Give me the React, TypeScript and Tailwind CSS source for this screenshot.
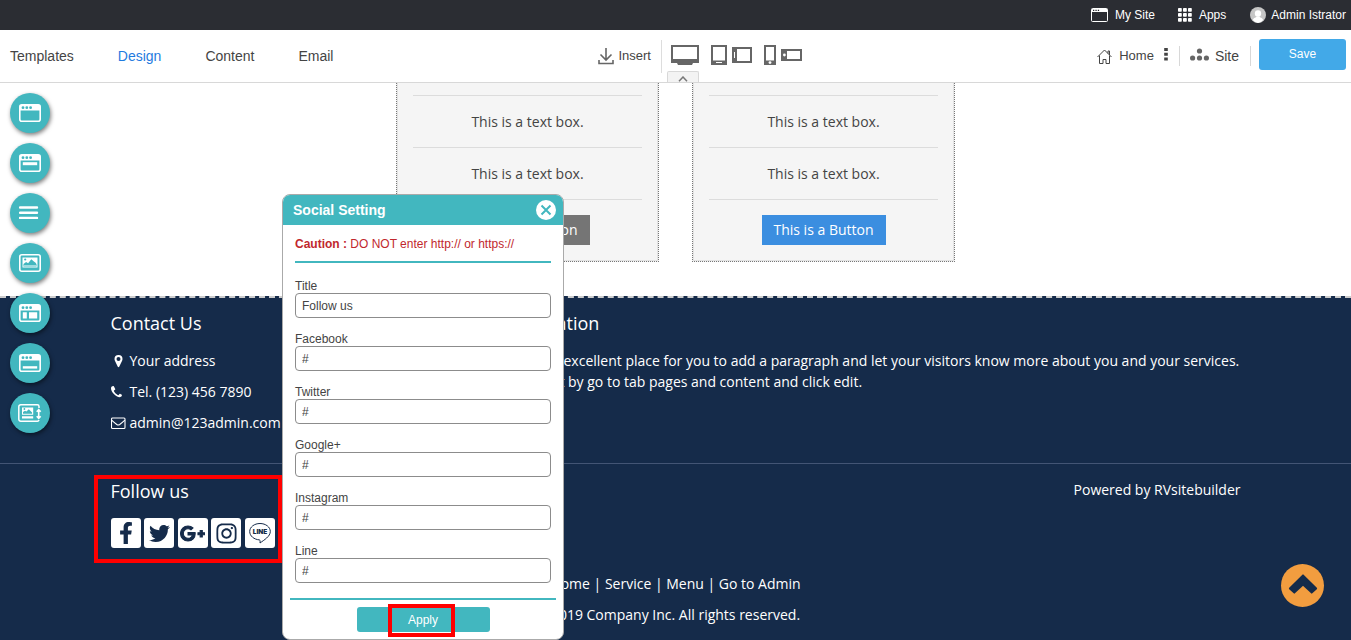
import type { ReactNode } from "react";
import { FaFacebookF, FaGooglePlusG, FaInstagram, FaTwitter } from "react-icons/fa";

function WindowIcon({ children }: { children?: ReactNode }) {
  return (
    <svg width="22" height="18" viewBox="0 0 22 18" fill="none" aria-hidden="true">
      <rect x="0.8" y="0.8" width="20.4" height="16.4" rx="2" stroke="white" strokeWidth="1.6" />
      <path d="M1 1h20v5.5H1z" fill="white" />
      <circle cx="4" cy="3.7" r="1.4" fill="#42b7bf" />
      <circle cx="7.8" cy="3.7" r="1.4" fill="#42b7bf" />
      <circle cx="11.6" cy="3.7" r="1.4" fill="#42b7bf" />
      {children}
    </svg>
  );
}

const tools: { label: string; icon: ReactNode }[] = [
  { label: "Header", icon: <WindowIcon /> },
  { label: "Title bar", icon: <WindowIcon><path d="M3.8 8.2h14.4v3H3.8z" fill="white" /></WindowIcon> },
  {
    label: "Navigation",
    icon: (
      <svg width="22" height="18" viewBox="0 0 22 18" aria-hidden="true">
        <path d="M1 3.500h17M1 8.700h17M1 13.900h17" stroke="white" strokeWidth="2.4" strokeLinecap="round" />
      </svg>
    ),
  },
  {
    label: "Banner",
    icon: (
      <svg width="22" height="18" viewBox="0 0 22 18" fill="none" aria-hidden="true">
        <rect x="0.8" y="0.8" width="20.4" height="16.4" rx="2" stroke="white" strokeWidth="1.6" />
        <path d="M3.5 3.5h15v10h-15z" fill="white" />
        <path d="M4.5 12.5v-2.6l2.6-2 2 1.3 3.2-3.9 2.3 2 2 1.4.9 1.6v2.2z" fill="#42b7bf" />
        <path d="M4.5 11h13v1.5h-13z" fill="#9edce0" />
        <circle cx="6.2" cy="5.5" r="1.1" fill="#42b7bf" />
      </svg>
    ),
  },
  { label: "Layout", icon: <WindowIcon><path d="M3.8 8.2h4v6.2h-4zM10 8.2h8.2v6.2H10z" fill="white" /></WindowIcon> },
  { label: "Footer", icon: <WindowIcon><path d="M3.8 12.2h14.4v2.4H3.8z" fill="white" /></WindowIcon> },
  {
    label: "Section height",
    icon: (
      <svg width="24" height="18" viewBox="0 0 24 18" fill="none" aria-hidden="true">
        <path d="M21 4V2.5A1.7 1.7 0 0 0 19.3.8H2.7A1.9 1.9 0 0 0 .8 2.7v12.6a1.9 1.9 0 0 0 1.9 1.9h16.6a1.7 1.7 0 0 0 1.7-1.2" stroke="white" strokeWidth="1.5" />
        <path d="M4 3.5h11.2v7.2H4zM4 12.2h11.2v2.2H4z" fill="white" />
        <path d="M5 9.8V8l2-1.2 1.4.8 2.4-2.3 1.500 1.500 1.800 1.700v1.300z" fill="#42b7bf" />
        <circle cx="6.4" cy="5" r="0.9" fill="#42b7bf" />
        <path d="M20.7 6v8M18.7 7.800l2-2.200 2 2.200M18.700 12.200l2 2.200 2-2.200" stroke="white" strokeWidth="1.6" />
      </svg>
    ),
  },
];

const fields = [
  { id: "title", label: "Title", value: "Follow us" },
  { id: "facebook", label: "Facebook", value: "#" },
  { id: "twitter", label: "Twitter", value: "#" },
  { id: "google", label: "Google+", value: "#" },
  { id: "instagram", label: "Instagram", value: "#" },
  { id: "line", label: "Line", value: "#" },
];

function TopBar() {
  return (
    <div className="flex h-[30px] items-center justify-end bg-[#2b2d33] pr-[5px] text-xs text-white">
      <a href="#" className="flex items-center gap-[6px]">
        <svg width="18" height="14" viewBox="0 0 18 14" fill="none" aria-hidden="true">
          <rect x="0.5" y="0.5" width="16" height="13" rx="1" stroke="white" />
          <path d="M1 1h15v3H1z" fill="white" />
          <path d="M2 2.3h1.3M4.4 2.3h1.3M6.8 2.3h1.3" stroke="#2b2d33" strokeWidth="1.2" />
        </svg>
        My Site
      </a>
      <a href="#" className="ml-[23px] flex items-center gap-[7px]">
        <svg width="14" height="14" viewBox="0 0 14 14" fill="white" aria-hidden="true">
          {[0, 5, 10].map((y) => [0, 5, 10].map((x) => <rect key={`${x}-${y}`} x={x} y={y} width="3.8" height="3.8" rx="0.8" />))}
        </svg>
        Apps
      </a>
      <a href="#" className="ml-6 flex items-center gap-[5px]">
        <svg width="16" height="16" viewBox="0 0 16 16" aria-hidden="true">
          <circle cx="8" cy="8" r="8" fill="#c6c6c6" />
          <circle cx="8" cy="6.5" r="3.2" fill="white" />
          <path d="M2.8 13c1-2.5 3.5-2.3 3.7-3.5h3c.2 1.2 2.7 1 3.7 3.5A8 8 0 0 1 8 16a8 8 0 0 1-5.2-3z" fill="white" />
        </svg>
        Admin Istrator
      </a>
    </div>
  );
}

function Toolbar() {
  return (
    <header className="relative flex h-[53px] items-center border-b border-[#d8d8d8] bg-white text-sm text-[#444]">
      <nav className="flex w-[44%] gap-11 pl-[10px]">
        <a href="#">Templates</a>
        <a href="#" className="text-[#1f7be0]">Design</a>
        <a href="#">Content</a>
        <a href="#">Email</a>
      </nav>
      <div className="relative flex h-full items-center pl-1">
        <button className="flex items-center gap-1 text-[13px]">
          <svg width="16" height="17" viewBox="0 0 16 17" fill="none" stroke="#666" strokeWidth="1.6" aria-hidden="true">
            <path d="M8 0v12M2.5 6.5L8 12l5.5-5.500M1 12v3.500h14V12" />
          </svg>
          Insert
        </button>
        <span className="ml-[10px] h-[33px] w-px bg-[#ddd]" />
        <div className="ml-[9px] flex items-center pb-[2px]">
          <button aria-label="Desktop">
            <svg width="28" height="20" viewBox="0 0 28 20" fill="none" aria-hidden="true">
              <rect x="1" y="1" width="26" height="15" stroke="#666" strokeWidth="2" />
              <path d="M0 14h28v4h-6l-1 2H7l-1-2H0z" fill="#666" />
            </svg>
          </button>
          <button aria-label="Tablet portrait" className="ml-3">
            <svg width="16" height="20" viewBox="0 0 16 20" aria-hidden="true">
              <path fillRule="evenodd" d="M0 0h16v20H0zM2 2v13.5h12V2zM5 17v1h6v-1z" fill="#666" />
            </svg>
          </button>
          <button aria-label="Tablet landscape" className="ml-[5px]">
            <svg width="20" height="16" viewBox="0 0 20 16" aria-hidden="true">
              <path fillRule="evenodd" d="M0 0h20v16H0zM5 2v12h13V2zM2 5v6h1V5z" fill="#666" />
            </svg>
          </button>
          <button aria-label="Phone portrait" className="ml-3">
            <svg width="12" height="20" viewBox="0 0 12 20" aria-hidden="true">
              <path fillRule="evenodd" d="M0 0h12v20H0zM2 2v13.5h8V2z" fill="#666" />
              <circle cx="6" cy="17.600" r="1.4" fill="white" />
            </svg>
          </button>
          <button aria-label="Phone landscape" className="ml-[5px]">
            <svg width="21" height="12" viewBox="0 0 21 12" aria-hidden="true">
              <path fillRule="evenodd" d="M0 0h21v12H0zM6 2v8h13V2z" fill="#666" />
              <circle cx="3.4" cy="6" r="1.4" fill="white" />
            </svg>
          </button>
        </div>
        <button aria-label="Collapse toolbar" className="absolute bottom-0 left-[73px] flex h-[11px] w-8 items-center justify-center rounded-t-xs border border-b-0 border-[#d8d8d8] bg-[#f3f3f3] pt-1">
          <svg width="10" height="6" viewBox="0 0 10 6" fill="none" stroke="#777" strokeWidth="1.5" aria-hidden="true">
            <path d="M1 5.2L5 1l4 4.2" />
          </svg>
        </button>
      </div>
      <div className="ml-auto flex items-center pr-[5px]">
        <a href="#" className="flex items-center gap-[7px] text-[13px]">
          <svg width="15" height="15" viewBox="0 0 15 15" fill="none" stroke="#444" aria-hidden="true">
            <path d="M.5 8l7-7 7 7M2.5 6.500v8H6v-4h3v4h3.500v-8M11 4.500V2h1.500v4" />
          </svg>
          Home
        </a>
        <button aria-label="Page options" className="ml-[10px] pb-1">
          <svg width="4" height="13" viewBox="0 0 4 13" fill="#444" aria-hidden="true">
            <path d="M.2 0h3.6v3H.2zM.2 4.8h3.6v3H.2zM.2 9.6h3.6v3H.2z" />
          </svg>
        </button>
        <span className="ml-[11px] h-5 w-px bg-[#d8d8d8]" />
        <a href="#" className="ml-[10px] flex items-center gap-[6px]">
          <svg width="19" height="17" viewBox="0 0 19 17" fill="#666" aria-hidden="true">
            <circle cx="9.5" cy="3" r="2.600" />
            <circle cx="2.6" cy="10" r="2.600" />
            <circle cx="9.5" cy="10" r="2.600" />
            <circle cx="16.4" cy="10" r="2.600" />
          </svg>
          Site
        </a>
        <span className="ml-[11px] h-5 w-px bg-[#d8d8d8]" />
        <button className="mb-1 ml-2 h-[31px] w-[87px] rounded-[3px] bg-[#42a9e8] text-xs text-white">Save</button>
      </div>
    </header>
  );
}

function Card({ color }: { color: string }) {
  return (
    <article className="w-[263px] border border-t-0 border-dotted border-[#777] bg-[#f5f5f5] text-center text-[14px] text-[#444]">
      <div className="border border-t-0 border-[#e2e2e2] px-[15px] pt-3 pb-[15px]">
        <p className="border-t border-[#dcdcdc] leading-[51px]">This is a text box.</p>
        <p className="border-y border-[#dcdcdc] leading-[51px]">This is a text box.</p>
        <button className={`mt-[15px] h-[30px] w-[124px] pb-[2px] text-white ${color}`}>This is a Button</button>
      </div>
    </article>
  );
}

function LineIcon() {
  return (
    <svg width="24" height="24" viewBox="0 0 24 24" aria-hidden="true">
      <path d="M12 2.5c5.7 0 10.3 3.5 10.3 8 0 5-6.3 8.5-10.3 11.5.2-1.5.3-2.7-.5-3.1C6 18.5 1.7 15 1.700 10.500c0-4.500 4.600-8 10.300-8z" fill="none" stroke="#152b4a" strokeWidth="1" />
      <text x="12" y="12.7" textAnchor="middle" fontFamily="Inter, sans-serif" fontSize="6.5" fontWeight="900" fill="#152b4a">LINE</text>
    </svg>
  );
}

function Footer() {
  const social = [
    { label: "Facebook", icon: <FaFacebookF size={22} /> },
    { label: "Twitter", icon: <FaTwitter size={21} /> },
    { label: "Google+", icon: <FaGooglePlusG size={25} stroke="currentColor" strokeWidth={26} /> },
    { label: "Instagram", icon: <FaInstagram size={23} /> },
    { label: "Line", icon: <LineIcon /> },
  ];
  return (
    <footer className="flex-1 border-t-2 border-dashed border-[#ccc] bg-[#152b4a] text-[14px] text-white">
      <div className="mx-auto flex h-[165px] w-[1130px] max-w-full">
        <section className="w-[389px] shrink-0 pt-[11px]">
          <h2 className="text-lg leading-[28px]">Contact Us</h2>
          <ul className="mt-2 leading-[31px]">
            <li className="flex items-center gap-1">
              <svg width="15" height="14" viewBox="0 0 15 14" fill="white" aria-hidden="true">
                <path fillRule="evenodd" d="M7.500 1a4 4 0 0 1 4 4c0 .8-.2 1.300-.4 1.700l-2.900 6.100a.8.8 0 0 1-1.400 0L3.900 6.700A4 4 0 0 1 3.500 5a4 4 0 0 1 4-4zm0 2a2 2 0 1 0 0 4 2 2 0 0 0 0-4z" />
              </svg>
              Your address
            </li>
            <li className="flex items-center gap-1">
              <svg width="15" height="14" viewBox="0 0 15 14" fill="white" aria-hidden="true">
                <path d="M11 9.600c0 .3-.1 1-.3 1.400-.3.700-1.200 1.200-2 1.200-1 0-2-.4-3-1C3.700 10 1.900 8.200.8 6.200.3 5.300 0 4.400 0 3.500c0-1.100.5-2 1.400-2.300.4-.1.900-.2 1.100-.2.200 0 .4.300.6.800l1 1.900c.1.200.2.300.2.500 0 .5-1.500 1.200-1.500 1.600 0 .3.300.7.5 1 .9 1.300 1.700 2.100 3 3 .3.200.7.500 1 .5.400 0 1.100-1.500 1.600-1.500.2 0 .3.100.500.200l1.300.7c.3.100.3-.1.300-.1z" />
              </svg>
              Tel. (123) 456 7890
            </li>
            <li className="flex items-center gap-1">
              <svg width="15" height="14" viewBox="0 0 15 14" fill="none" stroke="white" strokeWidth="1.1" aria-hidden="true">
                <rect x="0.5" y="2" width="13.5" height="10.500" rx="1" />
                <path d="M.6 4.200c1.800 1.700 4.400 3.700 5.200 4.300.9.600 2 .6 2.900 0 .8-.6 3.400-2.600 5.200-4.300" />
              </svg>
              admin@123admin.com
            </li>
          </ul>
        </section>
        <section className="min-w-0 flex-1 pt-[11px]">
          <h2 className="text-lg leading-[28px]">Information</h2>
          <p className="mt-[13px] leading-[21px]">
            This is an excellent place for you to add a paragraph and let your visitors know more about you and your services.
            <br />
            Easily edit by go to tab pages and content and click edit.
          </p>
        </section>
      </div>
      <div className="border-t border-[#435575]">
        <div className="mx-auto flex w-[1130px] max-w-full justify-between">
          <section className="pt-[13px]">
            <h2 className="text-lg leading-[28px]">Follow us</h2>
            <div className="mt-[13px] flex w-[164px] justify-between">
              {social.map((s) => (
                <a key={s.label} href="#" aria-label={s.label} className="flex size-[30px] items-center justify-center rounded-[3px] bg-white text-[#152b4a]">
                  {s.icon}
                </a>
              ))}
            </div>
          </section>
          <p className="pt-[15px] leading-[21px]">Powered by RVsitebuilder</p>
        </div>
        <div className="mt-5 text-center leading-[31px]">
          <nav><a href="#">Home</a> | <a href="#">Service</a> | <a href="#">Menu</a> | <a href="#">Go to Admin</a></nav>
          <p>2019 Company Inc. All rights reserved.</p>
        </div>
      </div>
    </footer>
  );
}

function SocialDialog() {
  return (
    <form className="absolute top-[194px] left-[282px] w-[282px] overflow-hidden rounded-lg border border-[#aaa] bg-white text-xs text-[#444]">
      <div className="flex h-[30px] items-center justify-between bg-[#42b7bf] pr-[7px] pl-[10px] text-white">
        <h2 className="text-sm font-bold">Social Setting</h2>
        <button type="button" aria-label="Close">
          <svg width="20" height="20" viewBox="0 0 20 20" fill="none" aria-hidden="true">
            <circle cx="10" cy="10" r="10" fill="white" />
            <path d="M5.5 5.5l9 9M14.5 5.5l-9 9" stroke="#42b7bf" strokeWidth="2" />
          </svg>
        </button>
      </div>
      <div className="px-3">
        <p className="border-b-2 border-[#42b7bf] pt-[11px] pb-[9px] leading-4 text-[#c1272d]">
          <b>Caution :</b> DO NOT enter http:// or https://
        </p>
        <div className="flex flex-col gap-[14px] pt-4">
          {fields.map((f) => (
            <div key={f.id} className="flex flex-col">
              <label htmlFor={f.id} className="leading-[14px]">{f.label}</label>
              <input id={f.id} type="text" defaultValue={f.value} className="h-[25px] rounded-[4px] border border-[#8c8c8c] bg-white px-[6px]" />
            </div>
          ))}
        </div>
      </div>
      <div className="mx-[7px] mt-[15px] flex justify-center border-t-2 border-[#42b7bf] pt-[7px] pb-[7px]">
        <div className="relative">
          <button type="button" className="h-[25px] w-[133px] rounded-[3px] bg-[#42b7bf] text-white">Apply</button>
          <span className="pointer-events-none absolute -top-[3px] left-[31px] h-[33px] w-[67px] border-4 border-[#ff0000]" />
        </div>
      </div>
    </form>
  );
}

export default function App() {
  return (
    <div className="relative flex min-h-screen flex-col overflow-hidden bg-white font-['Liberation_Sans',Arial,sans-serif]">
      <TopBar />
      <Toolbar />
      <main className="flex flex-1 flex-col font-['Open_Sans',sans-serif]">
        <section className="mb-[34px] flex justify-center gap-[33px]">
          <Card color="bg-[#757575]" />
          <Card color="bg-[#3b8ee0]" />
        </section>
        <Footer />
      </main>
      <aside className="absolute top-[93px] left-[10px] flex flex-col gap-[10px]">
        {tools.map((t) => (
          <button key={t.label} aria-label={t.label} className="flex size-10 items-center justify-center rounded-full bg-[#42b7bf] shadow-[1px_2px_4px_rgba(0,0,0,0.5)]">
            {t.icon}
          </button>
        ))}
      </aside>
      <span className="pointer-events-none absolute top-[475px] left-[94px] h-[88px] w-[188px] border-4 border-[#ff0000]" />
      <SocialDialog />
      <button aria-label="Back to top" className="absolute right-[27px] bottom-[33px] flex size-[43px] items-center justify-center rounded-full bg-[#f29d3f] pb-1">
        <svg width="30" height="20" viewBox="0 0 30 20" fill="none" aria-hidden="true">
          <path d="M15 1.300L28.200 14.500 23.700 18.700 15 10.500 6.300 18.700 1.800 14.500z" fill="#152b4a" stroke="#152b4a" strokeWidth="1.8" strokeLinejoin="round" />
        </svg>
      </button>
    </div>
  );
}
